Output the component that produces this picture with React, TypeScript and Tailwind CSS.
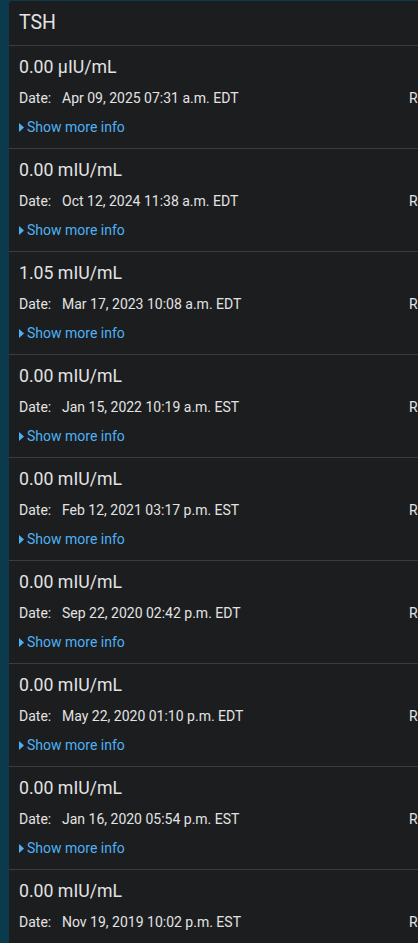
import React from 'react';

interface Result {
  value: string;
  date: string;
}

const results: Result[] = [
  { value: '0.00 μIU/mL', date: 'Apr 09, 2025 07:31 a.m. EDT' },
  { value: '0.00 mIU/mL', date: 'Oct 12, 2024 11:38 a.m. EDT' },
  { value: '1.05 mIU/mL', date: 'Mar 17, 2023 10:08 a.m. EDT' },
  { value: '0.00 mIU/mL', date: 'Jan 15, 2022 10:19 a.m. EST' },
  { value: '0.00 mIU/mL', date: 'Feb 12, 2021 03:17 p.m. EST' },
  { value: '0.00 mIU/mL', date: 'Sep 22, 2020 02:42 p.m. EDT' },
  { value: '0.00 mIU/mL', date: 'May 22, 2020 01:10 p.m. EDT' },
  { value: '0.00 mIU/mL', date: 'Jan 16, 2020 05:54 p.m. EST' },
  { value: '0.00 mIU/mL', date: 'Nov 19, 2019 10:02 p.m. EST' },
];

export default function App() {
  return (
    <div className="h-[943px] w-[418px] overflow-hidden bg-[#0b3a4c] pt-[1px] font-['Roboto','Liberation_Sans',sans-serif]">
      <div className="ml-[9px] w-[640px] min-h-[942px] rounded-tl-[3px] bg-[#1c1d1f] text-[#e3e3e3]">
        {/* header */}
        <div className="h-[45px] border-b border-[#3c3c3c] pl-[10px] text-[19.5px] leading-[43px]">TSH</div>

        {results.map((r, i) => (
          <div key={i} className="border-b border-[#3c3c3c] pl-[10px] pt-[9px] pb-[11px]">
            <div className="text-[17.7px] leading-[24px]">{r.value}</div>
            <div className="mt-[9px] grid grid-cols-[390px_1fr] text-[14px] leading-[20px]">
              <div className="flex">
                <span className="w-[43px]">Date:</span>
                <span>{r.date}</span>
              </div>
              <span>Reference range:</span>
            </div>
            <div className="mt-[9px] flex items-center text-[14px] leading-[20px] text-[#4db2f5]">
              <svg width="6" height="9" viewBox="0 0 6 9" className="mr-[2px]">
                <path d="M0 0 L5 4.5 L0 9 Z" fill="#4db2f5" />
              </svg>
              Show more info
            </div>
          </div>
        ))}
      </div>
    </div>
  );
}
